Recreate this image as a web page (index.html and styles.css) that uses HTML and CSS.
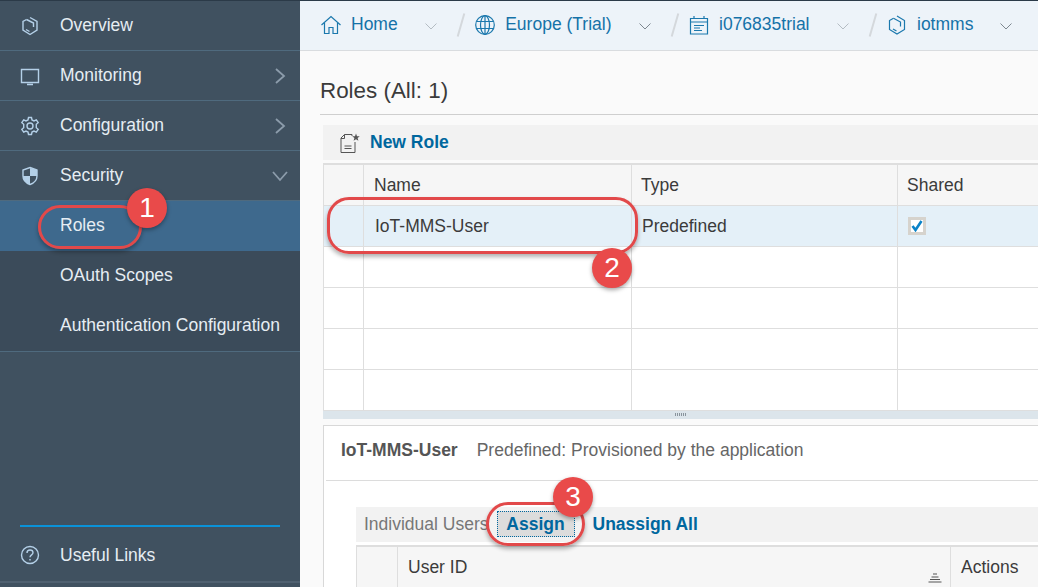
FILE: index.html
```html
<!DOCTYPE html>
<html lang="en">
<head>
    <meta charset="UTF-8">
    <title>Roles</title>
    <link rel="stylesheet" href="styles.css">
</head>
<body>
    <div class="page">
        <!-- Left navigation -->
        <nav class="sidebar">
            <div class="nav-item">
                <svg class="nav-icon" viewBox="0 0 20 20"><path d="M10 1.5 17 5.5V14L10 18.500 3 14V5.500L6.500 3.500"/><path d="M6.500 3.500 13.500 7V11M6 13.500 9.500 15.500"/></svg>
                <span>Overview</span>
            </div>
            <div class="nav-item">
                <svg class="nav-icon" viewBox="0 0 20 20"><path d="M1.500 3.500H18.500V16.500H1.500ZM7 18.500H13"/></svg>
                <span>Monitoring</span>
                <svg class="nav-arrow" viewBox="0 0 12 16"><path d="M2 1 10 8 2 15"/></svg>
            </div>
            <div class="nav-item">
                <svg class="nav-icon" viewBox="0 0 20 20"><circle cx="10" cy="10" r="3"/><path d="M8.500 1.500H11.500L12 4 14 5 16.300 3.900 18.200 6.700 16.300 8.300V11.700L18.200 13.300 16.300 16.100 14 15 12 16 11.500 18.500H8.500L8 16 6 15 3.700 16.100 1.800 13.300 3.700 11.700V8.300L1.800 6.700 3.700 3.900 6 5 8 4Z"/></svg>
                <span>Configuration</span>
                <svg class="nav-arrow" viewBox="0 0 12 16"><path d="M2 1 10 8 2 15"/></svg>
            </div>
            <div class="nav-item">
                <svg class="nav-icon" viewBox="0 0 20 20"><path class="icon-fill" d="M10 2 17 4V10H10ZM10 10V18.500C6 17 3 14.500 3 10H10Z"/><path d="M10 1.500 17 4V10C17 14.500 14 17 10 18.500 6 17 3 14.500 3 10V4Z"/></svg>
                <span>Security</span>
                <svg class="nav-arrow nav-arrow-down" viewBox="0 0 16 12"><path d="M1 2 8 10 15 2"/></svg>
            </div>
            <div class="subnav">
                <div class="nav-item sub-item active"><span>Roles</span></div>
                <div class="nav-item sub-item"><span>OAuth Scopes</span></div>
                <div class="nav-item sub-item"><span>Authentication Configuration</span></div>
            </div>
            <div class="sidebar-foot">
                <div class="foot-rule"></div>
                <div class="nav-item foot-item">
                    <svg class="nav-icon" viewBox="0 0 20 20"><circle cx="10" cy="10" r="8.500"/><path d="M7 8C7 6 8.500 5 10 5 11.800 5 13 6.200 13 7.700 13 9.800 10 10 10 12.300M10 14V15.500"/></svg>
                    <span>Useful Links</span>
                </div>
            </div>
        </nav>

        <div class="main">
            <!-- Breadcrumb bar -->
            <header class="topbar">
                <svg class="crumb-icon" viewBox="0 0 20 20"><path d="M0.500 10 10 1.500 19.500 10M3.500 8V18.500H8V12.500H12V18.500H16.500V8"/></svg>
                <span class="crumb-text">Home</span>
                <svg class="crumb-arrow faint" viewBox="0 0 12 7"><path d="M0.500 0.500 6 6 11.500 0.500"/></svg>
                <span class="crumb-slash"></span>
                <svg class="crumb-icon" viewBox="0 0 20 20"><circle cx="10" cy="10" r="9.300"/><ellipse cx="10" cy="10" rx="4.500" ry="9.300"/><path d="M10 0.700V19.300M1.500 6.500H18.500M1.500 13.500H18.500"/></svg>
                <span class="crumb-text">Europe (Trial)</span>
                <svg class="crumb-arrow" viewBox="0 0 12 7"><path d="M0.500 0.500 6 6 11.500 0.500"/></svg>
                <span class="crumb-slash"></span>
                <svg class="crumb-icon" viewBox="0 0 20 20"><path d="M1.500 3.500H18.500V19H1.500ZM1.500 7H18.500M5 1V4M15 1V4M5 10.500H15M5 13H11M5 15.500H13"/></svg>
                <span class="crumb-text">i076835trial</span>
                <svg class="crumb-arrow faint" viewBox="0 0 12 7"><path d="M0.500 0.500 6 6 11.500 0.500"/></svg>
                <span class="crumb-slash"></span>
                <svg class="crumb-icon" viewBox="0 0 20 20"><path d="M10 1 17.500 5.500V14.500L10 19 2.500 14.500V5.500L6.500 3.200"/><path d="M6.500 3.200 13.500 7V11.500M6 14 9.500 16"/></svg>
                <span class="crumb-text">iotmms</span>
                <svg class="crumb-arrow" viewBox="0 0 12 7"><path d="M0.500 0.500 6 6 11.500 0.500"/></svg>
            </header>

            <section class="content">
                <h1 class="page-title">Roles (All: 1)</h1>

                <div class="toolbar roles-toolbar">
                    <svg class="new-icon" viewBox="0 0 20 20"><path d="M8 1.500H12V3M4.500 1.500 1 5V19.500H15V9M1 5.500H4.500V1.500H8M4.500 13H11.500M4.500 15.500H11.500"/><path class="star" d="M16 0.500 17 3.200 19.800 3.300 17.600 5 18.400 7.700 16 6.200 13.600 7.700 14.400 5 12.200 3.300 15 3.200Z"/></svg>
                    <span class="tool-link">New Role</span>
                </div>

                <table class="grid roles-grid">
                    <tr class="grid-head">
                        <th class="sel-col"></th>
                        <th class="name-col">Name</th>
                        <th class="type-col">Type</th>
                        <th class="shared-col">Shared</th>
                    </tr>
                    <tr class="selected">
                        <td></td>
                        <td>IoT-MMS-User</td>
                        <td class="type-cell">Predefined</td>
                        <td><span class="check"><svg viewBox="0 0 12 12"><path d="M1.500 6 4.500 10 10.500 1"/></svg></span></td>
                    </tr>
                    <tr><td></td><td></td><td></td><td></td></tr>
                    <tr><td></td><td></td><td></td><td></td></tr>
                    <tr><td></td><td></td><td></td><td></td></tr>
                    <tr><td></td><td></td><td></td><td></td></tr>
                </table>

                <div class="splitter"><span class="grip"></span></div>

                <div class="detail">
                    <div class="detail-head">
                        <strong>IoT-MMS-User</strong>
                        <span>Predefined: Provisioned by the application</span>
                    </div>
                    <div class="toolbar users-toolbar">
                        <span class="tool-label">Individual Users</span>
                        <span class="tool-link assign">Assign</span>
                        <span class="tool-link">Unassign All</span>
                    </div>
                    <table class="grid users-grid">
                        <tr class="grid-head">
                            <th class="sel-col"></th>
                            <th class="user-col">User ID
                                <svg class="sort-icon" viewBox="0 0 14 10"><path d="M5 1H9M3.500 4H10.500M2 6.500H12M0.500 9H13.500"/></svg>
                            </th>
                            <th>Actions</th>
                        </tr>
                    </table>
                </div>
            </section>
        </div>

        <!-- Red callouts drawn over the screenshot -->
        <div class="ring ring-1"></div>
        <div class="ring ring-2"></div>
        <div class="ring ring-3"></div>
        <div class="badge badge-1">1</div>
        <div class="badge badge-2">2</div>
        <div class="badge badge-3">3</div>
    </div>
</body>
</html>
```

FILE: styles.css
```css
* {
    box-sizing: border-box;
}

html, body {
    margin: 0;
    padding: 0;
    height: 100%;
    overflow: hidden;
}

body {
    font-family: "Liberation Sans", Arial, sans-serif;
    font-size: 17.5px;
    color: #3b3b3b;
}

.page {
    position: relative;
    display: flex;
    width: 1038px;
    height: 587px;
    overflow: hidden;
    background-color: #fafafa;
    border-top: 1px solid #2b3a48;
}

/* Sidebar */
.sidebar {
    display: flex;
    flex-direction: column;
    flex: none;
    width: 300px;
    background-color: #405160;
    color: #e6edf3;
}

.nav-item {
    display: flex;
    align-items: center;
    flex: none;
    height: 50px;
    padding-left: 20px;
    border-bottom: 1px solid #4f6a7e;
    white-space: nowrap;
}

.nav-icon {
    flex: none;
    width: 20px;
    height: 20px;
    margin-right: 20px;
    fill: none;
    stroke: #b4d0e8;
    stroke-width: 1.4;
}

.icon-fill {
    fill: #b4d0e8;
    stroke: none;
}

.nav-arrow {
    flex: none;
    width: 12px;
    height: 16px;
    margin-left: auto;
    margin-right: 14px;
    fill: none;
    stroke: #8c9cab;
    stroke-width: 1.8;
}

.nav-arrow-down {
    width: 16px;
    height: 12px;
    margin-right: 12px;
}

.subnav {
    background-color: #3b4b5a;
    border-bottom: 1px solid #4f6a7e;
}

.sub-item {
    padding: 0 0 2px 60px;
    border-bottom: none;
}

.sub-item.active {
    background-color: #3e698d;
}

.sidebar-foot {
    margin-top: auto;
    margin-bottom: 4px;
    border-bottom: 2px solid #4f6070;
}

.foot-rule {
    height: 2px;
    margin: 0 20px 2px;
    background-color: #0a92d8;
}

.foot-item {
    height: 52px;
    border-bottom: none;
}

/* Breadcrumb bar */
.main {
    display: flex;
    flex-direction: column;
    flex: 1;
    min-width: 0;
}

.topbar {
    display: flex;
    align-items: center;
    flex: none;
    height: 50px;
    padding: 0 0 2px 21px;
    background-color: #edf3f9;
    border-bottom: 1px solid #d9dcdf;
    white-space: nowrap;
}

.crumb-icon {
    flex: none;
    width: 20px;
    height: 20px;
    margin-right: 10px;
    fill: none;
    stroke: #1b78ad;
    stroke-width: 1.2;
}

.crumb-text {
    color: #1572a8;
}

.crumb-arrow {
    flex: none;
    width: 12px;
    height: 7px;
    margin: 3px 21.5px 0 27px;
    fill: none;
    stroke: #7d8790;
}

.crumb-arrow.faint {
    stroke: #b4bcc3;
}

.crumb-slash {
    flex: none;
    width: 2px;
    height: 24px;
    margin: 0 13px 0 2px;
    background-color: #d4d8dc;
    transform: rotate(16deg);
}

/* Content */
.content {
    flex: 1;
    min-width: 0;
    padding-left: 20px;
}

.page-title {
    height: 64px;
    margin: 0;
    padding-top: 26px;
    font-size: 22.4px;
    font-weight: normal;
    line-height: 28px;
    border-bottom: 1px solid #cfcfcf;
}

.toolbar {
    display: flex;
    align-items: center;
    height: 35px;
    background-color: #f2f2f2;
    white-space: nowrap;
}

.roles-toolbar {
    margin: 10px 0 3px 3px;
    padding-left: 17px;
}

.new-icon {
    flex: none;
    width: 20px;
    height: 20px;
    margin-right: 10px;
    fill: none;
    stroke: #555;
    stroke-width: 1;
}

.new-icon .star {
    fill: #555;
    stroke: none;
}

.tool-link {
    font-weight: bold;
    color: #00679e;
}

.grid {
    width: 740px;
    border-collapse: collapse;
    table-layout: fixed;
}

.grid th,
.grid td {
    padding: 2px 10px 0 11px;
    font-weight: normal;
    text-align: left;
    border: 1px solid #dedede;
}

.grid-head th {
    padding-left: 10px;
    background-color: #f6f6f6;
    border-top-width: 2px;
}

.roles-grid {
    margin-left: 3px;
}

.roles-grid tr {
    height: 41px;
    background-color: #fff;
}

.roles-grid .selected {
    background-color: #e4f0f8;
}

.sel-col {
    width: 40px;
}

.name-col {
    width: 268px;
}

.type-col {
    width: 266px;
}

.grid-head .type-col,
.grid-head .shared-col {
    padding-left: 9px;
}

.grid .type-cell {
    padding-left: 10px;
}

.check {
    display: inline-flex;
    align-items: center;
    justify-content: center;
    width: 18px;
    height: 18px;
    margin: 1px 0 0 -1px;
    background-color: #fff;
    border: 3px solid #d6d3cd;
}

.check svg {
    width: 12px;
    height: 12px;
    flex: none;
    fill: none;
    stroke: #0a83c8;
    stroke-width: 2.6;
}

.splitter {
    display: flex;
    align-items: center;
    justify-content: center;
    height: 8px;
    margin: 0 0 6px 3px;
    background-color: #dce5eb;
}

.grip {
    width: 12px;
    height: 3px;
    background-image: repeating-linear-gradient(90deg, #8a949c 0, #8a949c 1px, transparent 1px, transparent 2px);
}

.detail {
    height: 170px;
    margin-left: 3px;
    background-color: #fff;
    border-top: 1px solid #d8d8d8;
    border-left: 1px solid #d8d8d8;
}

.detail-head {
    display: flex;
    align-items: center;
    gap: 19px;
    height: 55px;
    margin-left: 2px;
    padding: 0 0 4px 15px;
    color: #666;
    border-bottom: 1px solid #dcdcdc;
    white-space: nowrap;
}

.detail-head strong {
    color: #555;
}

.users-toolbar {
    margin: 26px 0 3px 32px;
    padding-left: 8px;
}

.tool-label {
    color: #777;
}

.assign {
    display: flex;
    align-items: center;
    justify-content: center;
    width: 78px;
    height: 26px;
    margin: 0 18px 0 8px;
    background-color: #dcdcdc;
    border: 1px dotted #00679e;
}

.users-grid {
    margin-left: 32px;
}

.users-grid tr {
    height: 44px;
}

.users-grid .sel-col {
    width: 41px;
}

.user-col {
    position: relative;
    width: 553px;
}

.users-grid th {
    padding-top: 0;
    padding-bottom: 2px;
    border-bottom: none;
}

.sort-icon {
    position: absolute;
    right: 8px;
    bottom: 7px;
    width: 14px;
    height: 10px;
    fill: none;
    stroke: #555;
    stroke-width: 1;
}

/* Callouts */
.ring {
    position: absolute;
    border: 3px solid #e2494a;
    border-radius: 22px;
    box-shadow: 0 3px 4px rgba(0, 0, 0, 0.3);
}

.ring-1 {
    left: 38px;
    top: 204px;
    width: 104px;
    height: 44px;
}

.ring-2 {
    left: 327px;
    top: 196px;
    width: 311px;
    height: 57px;
}

.ring-3 {
    left: 486px;
    top: 501px;
    width: 99px;
    height: 44px;
}

.badge {
    position: absolute;
    width: 40px;
    height: 40px;
    font-size: 28px;
    line-height: 40px;
    text-align: center;
    color: #fff;
    background-color: #e94a4a;
    border-radius: 50%;
    box-shadow: 0 2px 4px rgba(0, 0, 0, 0.35);
}

.badge-1 {
    left: 127px;
    top: 187px;
}

.badge-2 {
    left: 592px;
    top: 247px;
}

.badge-3 {
    left: 553px;
    top: 476px;
}
```
